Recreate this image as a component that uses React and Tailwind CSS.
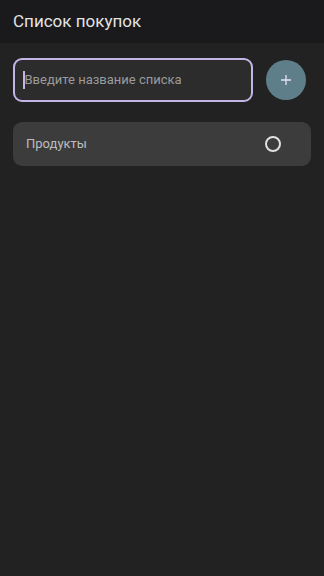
export default function App() {
  return (
    <div className="min-h-[576px] bg-[#222222] font-['Roboto',sans-serif]">
      <header className="h-[43px] bg-[#1a191b] flex items-center px-[13px]">
        <h1 className="text-[17px] text-[#e3e3e3] leading-none">Список покупок</h1>
      </header>

      <div className="px-[13px] pt-[15px] flex items-center gap-[13px]">
        <div className="flex-1 h-[44px] rounded-[9px] border-2 border-[#c3b6e6] bg-[#2c2c2c] flex items-center pl-[8px]">
          <span className="w-[1.5px] h-[18px] bg-[#c3b6e6]" />
          <span className="text-[13px] text-[#9b9b9b]">Введите название списка</span>
        </div>
        <button className="w-[40px] h-[40px] rounded-full bg-[#5e7f89] flex items-center justify-center mr-[5px]">
          <svg width="12" height="12" viewBox="0 0 12 12">
            <path d="M6 1v10M1 6h10" stroke="#e6e0f2" strokeWidth="1.3" />
          </svg>
        </button>
      </div>

      <div className="px-[13px] pt-[20px]">
        <div className="h-[44px] rounded-[9px] bg-[#3c3c3c] flex items-center pl-[13px] pr-[30px] justify-between">
          <span className="text-[13px] text-[#bdbdbd]">Продукты</span>
          <span className="w-[16px] h-[16px] rounded-full border-2 border-[#e0e0e0]" />
        </div>
      </div>
    </div>
  );
}
